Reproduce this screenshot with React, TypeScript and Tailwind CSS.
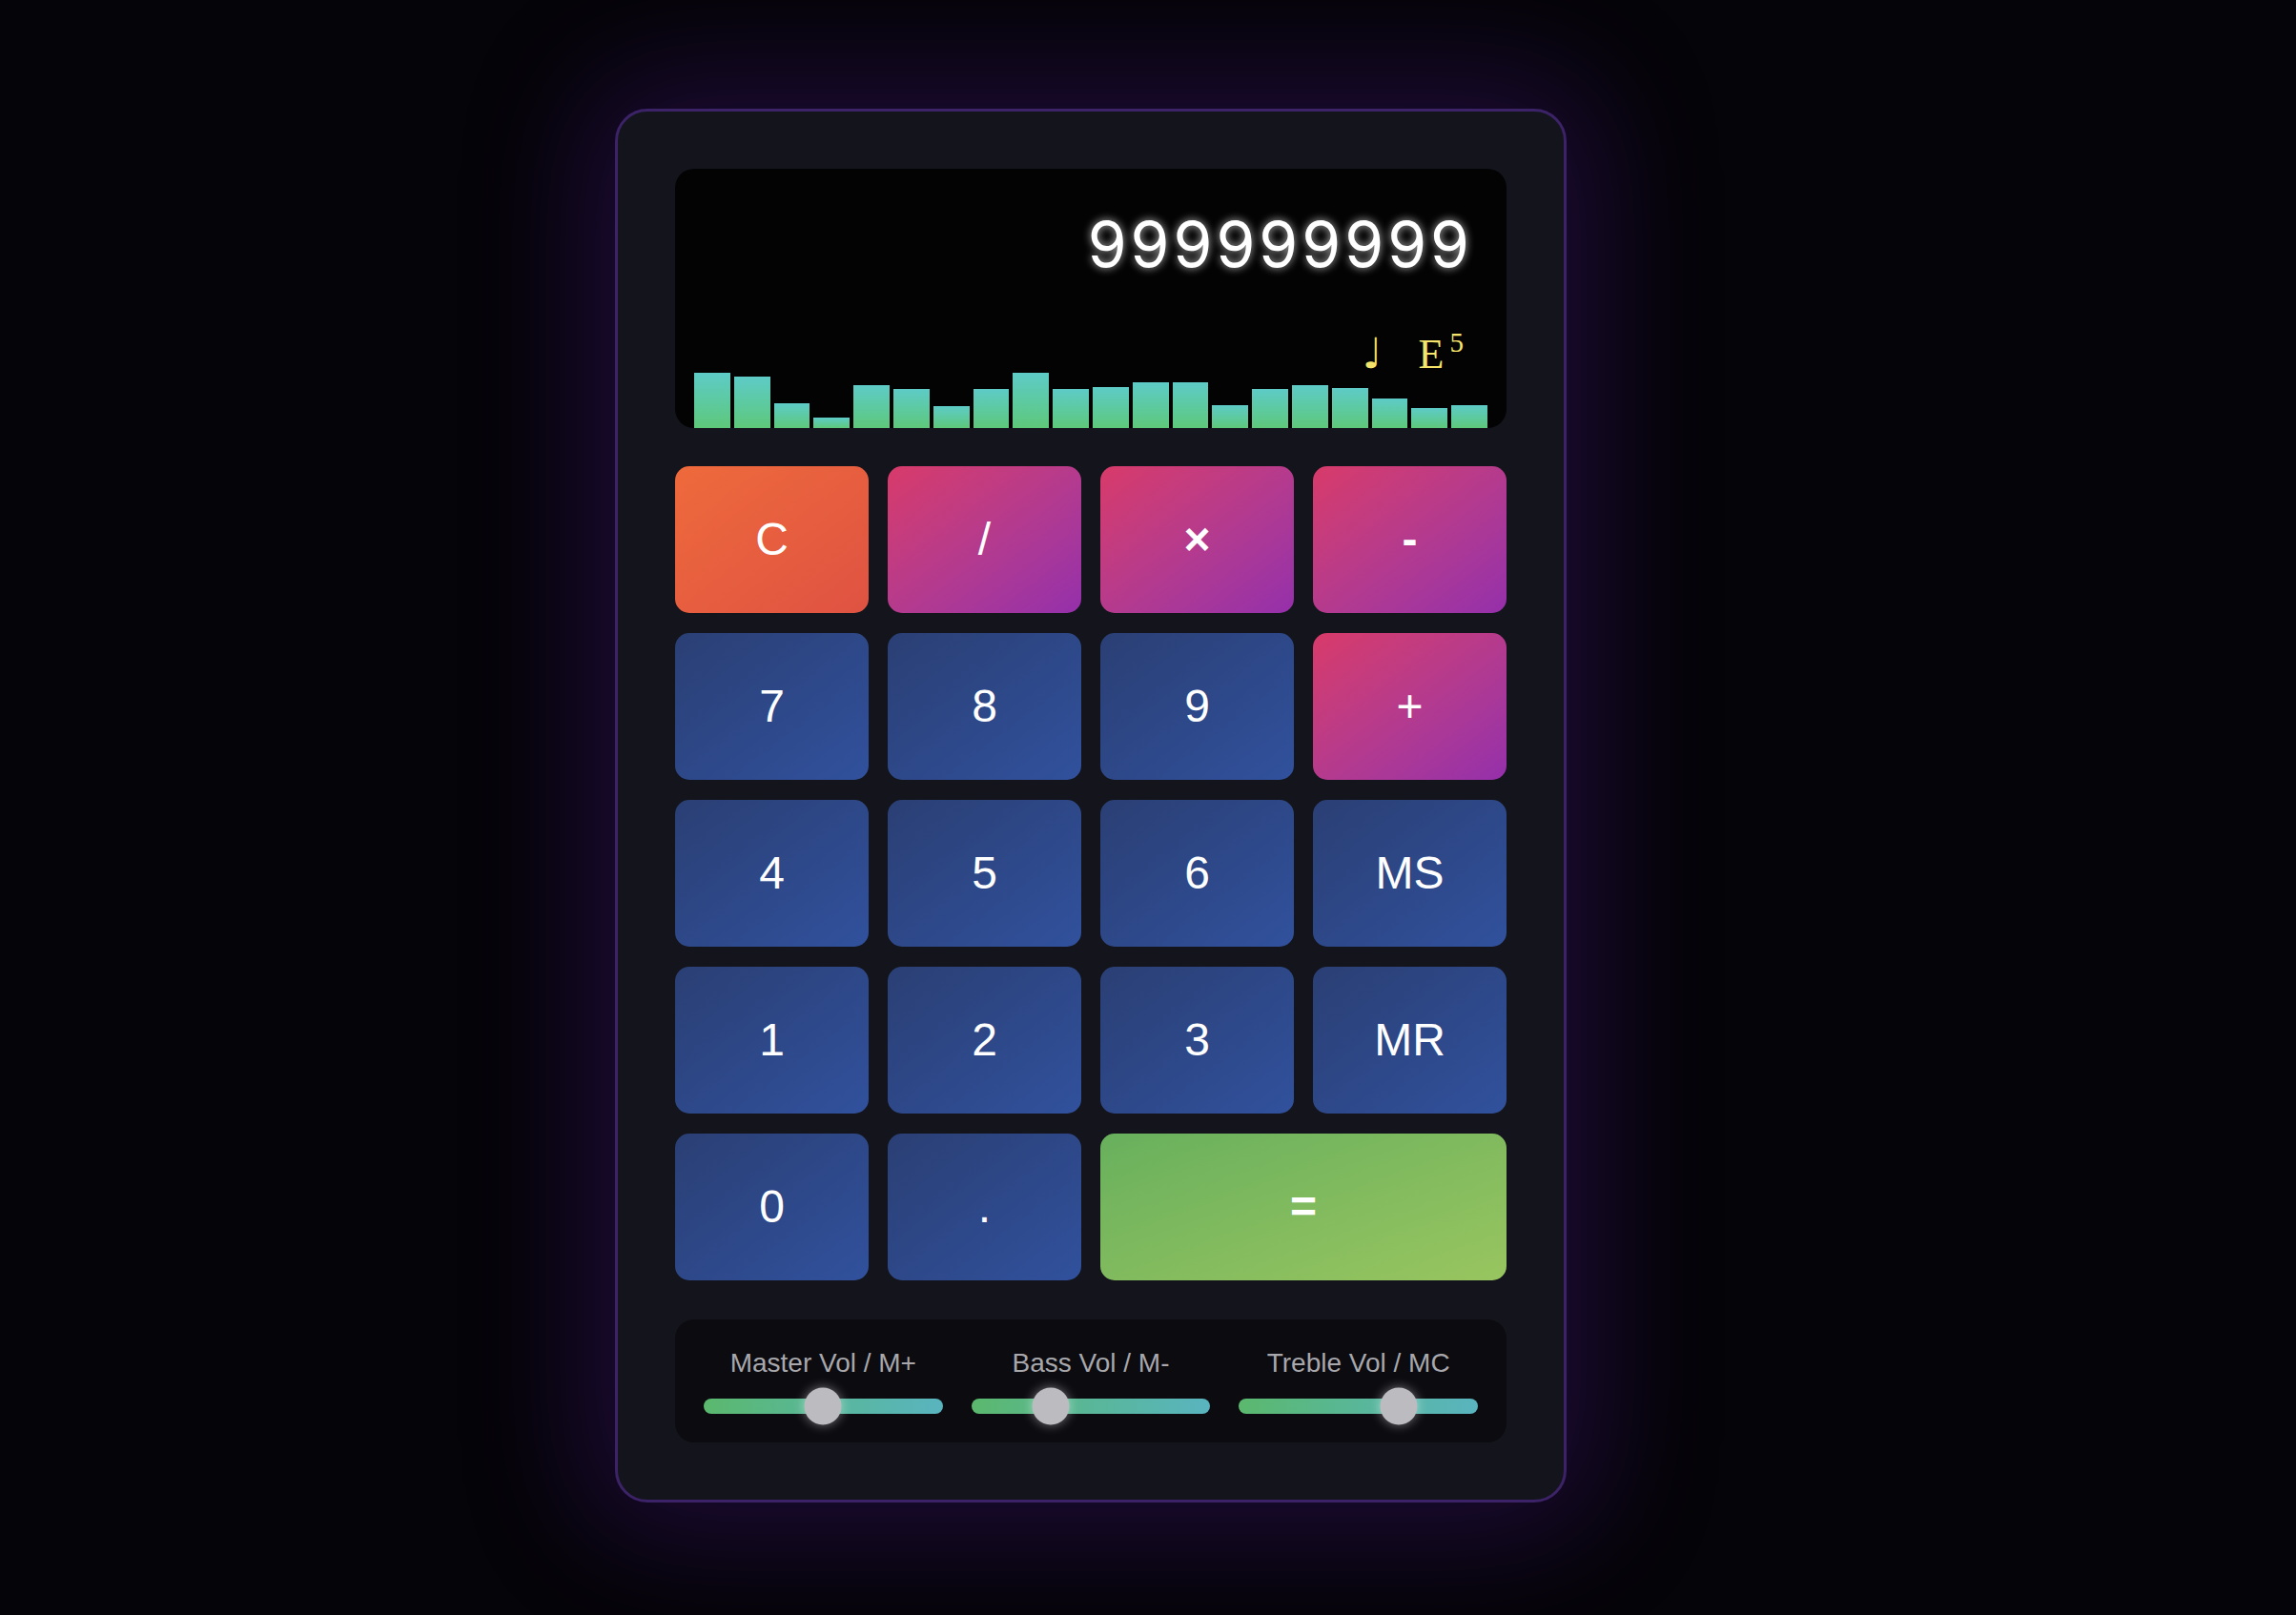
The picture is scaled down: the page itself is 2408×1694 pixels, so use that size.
import React from "react";

const bars = [58, 54, 26, 11, 45, 41, 23, 41, 58, 41, 43, 48, 48, 24, 41, 45, 42, 31, 21, 24];

type Kind = "clear" | "op" | "num" | "eq";
type KeyDef = { label: string; kind: Kind; wide?: boolean; heavy?: boolean };

const keys: KeyDef[] = [
  { label: "C", kind: "clear" },
  { label: "/", kind: "op" },
  { label: "×", kind: "op", heavy: true },
  { label: "-", kind: "op", heavy: true },
  { label: "7", kind: "num" },
  { label: "8", kind: "num" },
  { label: "9", kind: "num" },
  { label: "+", kind: "op" },
  { label: "4", kind: "num" },
  { label: "5", kind: "num" },
  { label: "6", kind: "num" },
  { label: "MS", kind: "num" },
  { label: "1", kind: "num" },
  { label: "2", kind: "num" },
  { label: "3", kind: "num" },
  { label: "MR", kind: "num" },
  { label: "0", kind: "num" },
  { label: ".", kind: "num" },
  { label: "=", kind: "eq", wide: true, heavy: true },
];

const kindCls: Record<Kind, string> = {
  clear: "bg-linear-to-br from-[#ee6a3b] to-[#df5242]",
  op: "bg-linear-to-br from-[#d83a69] to-[#952fab]",
  num: "bg-linear-to-br from-[#2a3f74] to-[#31519d]",
  eq: "bg-linear-to-br from-[#68b05d] to-[#98c55f]",
};

function Slider({ label, value }: { label: string; value: number }) {
  return (
    <div className="flex flex-col items-center">
      <div className="text-[28px] leading-[34px] text-[#a7a7ac] whitespace-nowrap">{label}</div>
      <div className="relative mt-[20px] h-[16px] w-full rounded-full bg-linear-to-r from-[#5bb86d] to-[#59b4bf]">
        <div
          className="absolute top-1/2 h-[39px] w-[39px] -translate-x-1/2 -translate-y-1/2 rounded-full bg-[#bcbcc0] shadow-[0_0_12px_rgba(255,255,255,0.45)]"
          style={{ left: `calc(19.5px + (100% - 39px) * ${value / 100})` }}
        />
      </div>
    </div>
  );
}

export default function App() {
  return (
    <div
      className="min-h-screen w-full bg-[#050408] pl-[645px] pt-[114px]"
      style={{ fontFamily: '"Liberation Sans", Arial, sans-serif' }}
    >
      <div className="flex w-[998px] flex-col rounded-[34px] border-[3px] border-[#3c2266] bg-[#14151c] p-[60px] shadow-[0_0_130px_30px_rgba(85,28,160,0.32)]">
        {/* Display */}
        <div className="flex h-[272px] flex-col overflow-hidden rounded-[20px] bg-[#030304]">
          <div
            className="pr-[35px] pt-[46px] text-right text-[66px] leading-none tracking-[4px] text-white [text-shadow:0_0_10px_rgba(255,255,255,0.75)]"
            style={{ fontFamily: 'Inter, "Liberation Sans", sans-serif' }}
          >
            999999999
          </div>
          <div
            className="mt-auto h-[42px] pr-[45px] text-right text-[44px] leading-[42px] text-[#f6e46a]"
            style={{ fontFamily: '"Liberation Serif", "Times New Roman", serif' }}
          >
            <span className="text-[44px] leading-none" style={{ fontFamily: '"DejaVu Sans", sans-serif' }}>
              ♩
            </span>
            <span className="ml-[38px] leading-none">E</span>
            <sup className="ml-[6px] top-[-17px] text-[29px]">5</sup>
          </div>
          <div className="flex h-[58px] items-end gap-[4px] px-[20px]">
            {bars.map((h, i) => (
              <div
                key={i}
                className="flex-1 bg-linear-to-b from-[#5ecbc7] to-[#5ec879]"
                style={{ height: `${h}px` }}
              />
            ))}
          </div>
        </div>

        {/* Keys */}
        <div className="mt-[40px] grid grid-cols-4 gap-x-[20px] gap-y-[21px]">
          {keys.map((k) => (
            <div
              key={k.label}
              className={`flex h-[154px] items-center justify-center rounded-[15px] text-[48px] text-white ${kindCls[k.kind]} ${
                k.wide ? "col-span-2" : ""
              } ${k.heavy ? "font-bold" : ""}`}
            >
              {k.label}
            </div>
          ))}
        </div>

        {/* Sliders */}
        <div className="mt-[41px] grid h-[129px] grid-cols-3 gap-x-[30px] rounded-[20px] bg-[#0b0b10] px-[30px] pt-[29px]">
          <Slider label="Master Vol / M+" value={50} />
          <Slider label="Bass Vol / M-" value={30} />
          <Slider label="Treble Vol / MC" value={70} />
        </div>
      </div>
    </div>
  );
}
